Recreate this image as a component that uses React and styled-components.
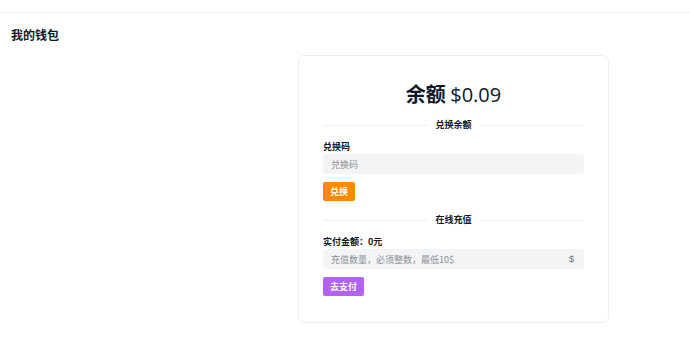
import React from "react";
import styled, { createGlobalStyle } from "styled-components";

const Global = createGlobalStyle`
  body {
    margin: 0;
    background: #fff;
    font-family: "Noto Sans CJK SC", "Noto Sans", "Liberation Sans", sans-serif;
    color: #111827;
  }
`;

export default function App() {
  return (
    <>
      <Global />
      <TopBar />
      <Page>
        <PageTitle>我的钱包</PageTitle>
        <Row>
          <Card>
            <Balance>
              <b>余额</b> <span>$0.09</span>
            </Balance>
            <Divider>兑换余额</Divider>
            <Label>兑换码</Label>
            <Field>
              <Input placeholder="兑换码" />
            </Field>
            <Button $color="#ff8a00">兑换</Button>
            <Divider $top={12}>在线充值</Divider>
            <Label>实付金额：0元</Label>
            <Field>
              <Input placeholder="充值数量，必须整数，最低10$" />
              <Suffix>$</Suffix>
            </Field>
            <Button $color="#b462f6">去支付</Button>
          </Card>
        </Row>
      </Page>
    </>
  );
}

const TopBar = styled.div`
  height: 12px;
  border-bottom: 1px solid #eef0f2;
`;

const Page = styled.div`
  padding: 14px 11px 0;
`;

const PageTitle = styled.h1`
  margin: 0;
  font-size: 12px;
  font-weight: 700;
  line-height: 16px;
`;

const Row = styled.div`
  display: flex;
  padding-left: 287px;
  margin-top: 12px;
`;

const Card = styled.div`
  box-sizing: border-box;
  width: 311px;
  height: 268px;
  border: 1px solid #eceef0;
  border-radius: 6px;
  padding: 22px 24px 0;
  display: flex;
  flex-direction: column;
  align-items: flex-start;
`;

const Balance = styled.div`
  align-self: stretch;
  text-align: center;
  font-size: 20px;
  line-height: 32px;
  margin-bottom: 7px;
  b {
    font-weight: 700;
  }
  span {
    font-family: "Open Sans", "Noto Sans", sans-serif;
    font-weight: 400;
  }
`;

const Divider = styled.div`
  align-self: stretch;
  display: flex;
  align-items: center;
  gap: 8px;
  margin-top: ${(p) => p.$top || 0}px;
  font-size: 9px;
  font-weight: 700;
  line-height: 14px;
  &::before,
  &::after {
    content: "";
    flex: 1;
    height: 1px;
    background: #eef0f2;
  }
`;

const Label = styled.div`
  margin-top: 8px;
  font-size: 9px;
  font-weight: 700;
  line-height: 13px;
`;

const Field = styled.div`
  align-self: stretch;
  display: flex;
  align-items: center;
  height: 20px;
  margin-top: 1px;
  background: #f3f4f5;
  border-radius: 3px;
  padding: 0 8px;
`;

const Input = styled.input`
  flex: 1;
  min-width: 0;
  border: none;
  background: transparent;
  outline: none;
  padding: 0;
  font-family: inherit;
  font-size: 9px;
  color: #111827;
  &::placeholder {
    color: #8b9096;
  }
`;

const Suffix = styled.span`
  font-family: "Liberation Sans", sans-serif;
  font-size: 9px;
  color: #6b7280;
  margin-right: 2px;
`;

const Button = styled.button`
  margin-top: 8px;
  height: 19px;
  padding: 0 7px;
  border: none;
  border-radius: 2px;
  background: ${(p) => p.$color};
  color: #fff;
  font-family: inherit;
  font-size: 9px;
  font-weight: 700;
  cursor: pointer;
`;
